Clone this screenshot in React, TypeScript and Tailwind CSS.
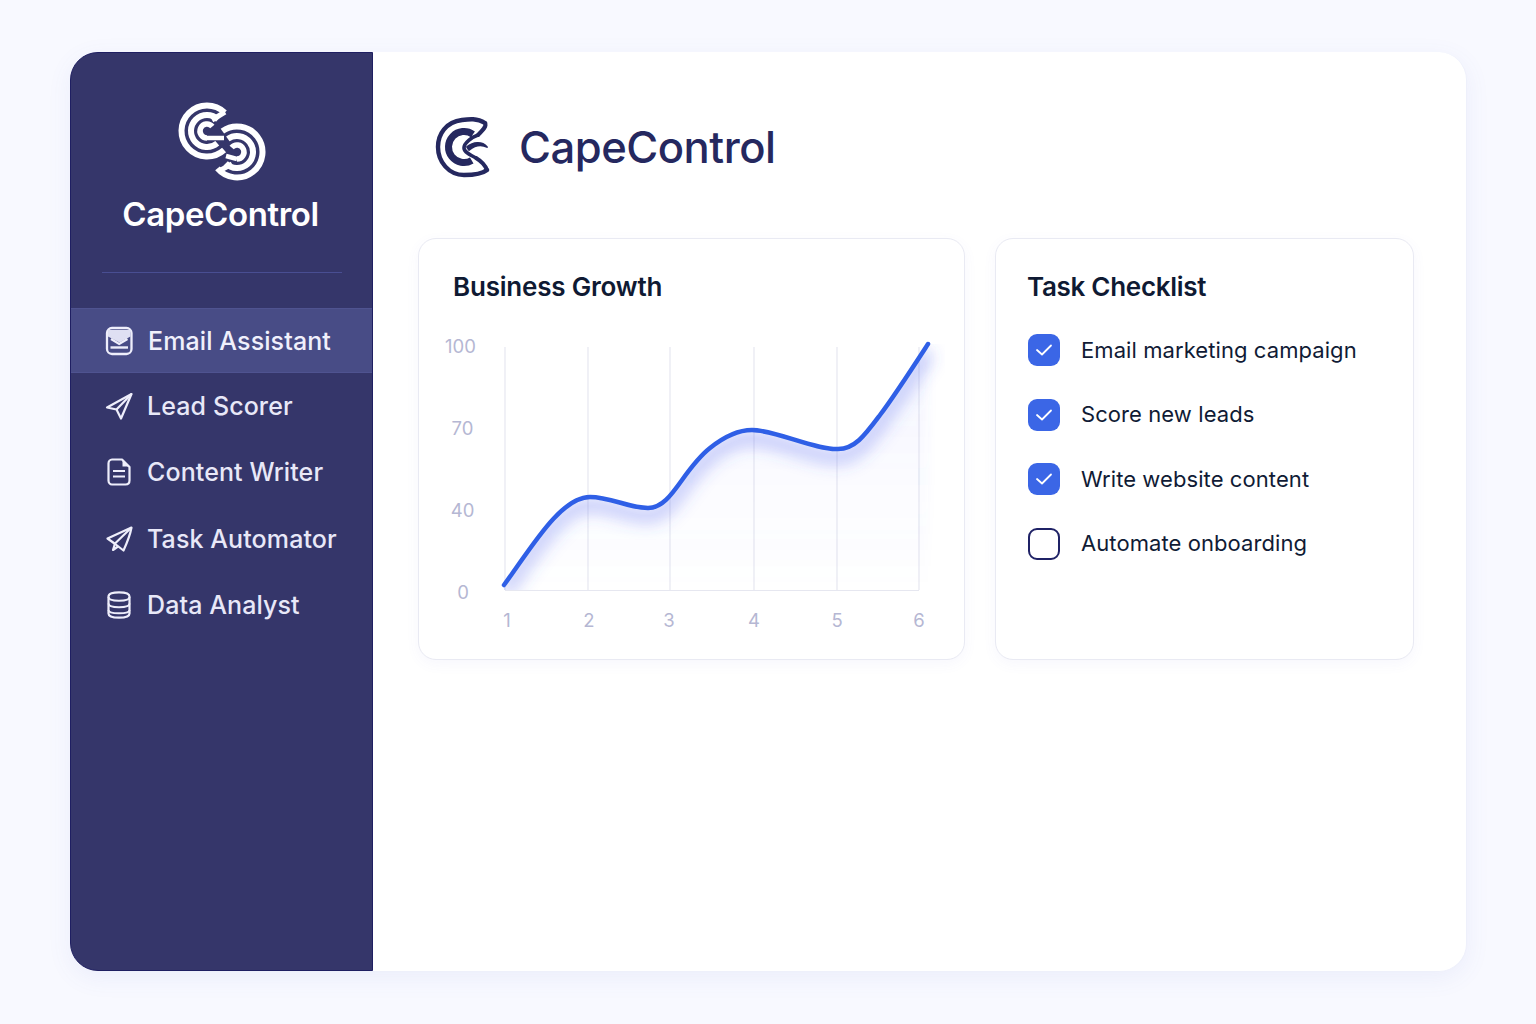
import React from "react";

const pt = (cx: number, cy: number, r: number, a: number) => {
  const t = (a * Math.PI) / 180;
  return [cx + r * Math.cos(t), cy + r * Math.sin(t)];
};
const arc = (cx: number, cy: number, r: number, a0: number, a1: number) => {
  const [x0, y0] = pt(cx, cy, r, a0);
  const [x1, y1] = pt(cx, cy, r, a1);
  const large = Math.abs(a1 - a0) > 180 ? 1 : 0;
  const sweep = a1 > a0 ? 1 : 0;
  return `M${x0.toFixed(2)} ${y0.toFixed(2)}A${r} ${r} 0 ${large} ${sweep} ${x1.toFixed(2)} ${y1.toFixed(2)}`;
};

function SideLogo() {
  const l = [207, 131];
  const r = [237, 152];
  return (
    <svg width="90" height="82" viewBox="177 101 90 82" className="block">
      <g fill="none" stroke="#ffffff" strokeWidth="6">
        <path d={arc(l[0], l[1], 25.500, -46, -312)} />
        <path d={arc(l[0], l[1], 16, -46, -310)} />
        <path d={arc(l[0], l[1], 7, -40, -270)} strokeWidth="5.500" />
        <path d="M225 112L212 120" strokeWidth="5" />
        <path d="M207 138L224 138" strokeWidth="4.500" />
        <path d={arc(r[0], r[1], 25.500, -125, 140)} />
        <path d={arc(r[0], r[1], 16, -125, 135)} />
        <path d={arc(r[0], r[1], 7, -140, 90)} strokeWidth="5.500" />
        <path d="M219 171L232 164" strokeWidth="5" />
        <path d="M237 159L226 156" strokeWidth="4.500" />
      </g>
    </svg>
  );
}

function MainLogo() {
  const c = [464, 147];
  return (
    <svg width="56" height="62" viewBox="434 116 56 62" className="block">
      <g fill="none" stroke="#25285f" strokeLinecap="round" strokeLinejoin="round">
        <path d="M485 123C477 118 469 119 462 120C446 122 438 134 438 147C438 162 449 175 464 175C474 175 482 174 487 170" strokeWidth="4.400" />
        <path d="M485 123C487 126 483 130 478 135" strokeWidth="4" />
        <path d="M487 170C485 165 481 161 476 158" strokeWidth="4" />
        <path d={arc(c[0], c[1], 15.500, -55, -300)} strokeWidth="7" strokeLinecap="butt" />
        <path d="M476 158C470 155 464 152 464 148C464 143 472 137 478 135" strokeWidth="3.600" />
        <path d="M467 147C473 142 482 141 487 147C481 144 474 146 469 150Z" fill="#25285f" strokeWidth="1.800" />
      </g>
    </svg>
  );
}

const iconStroke = "#eeeefb";

const EmailIcon = () => (
  <svg width="28" height="30" viewBox="0 0 28 30" className="block">
    <rect x="2" y="2" width="24.500" height="26" rx="5" fill="none" stroke={iconStroke} strokeWidth="2.300" />
    <path d="M3 4H25.500V10.500L14.500 16.500L3 10.500Z" fill="#dfe0f3" />
    <path d="M6 13L14.200 18L22.500 13" fill="none" stroke={iconStroke} strokeWidth="2.200" />
    <path d="M5.500 21.500H23" stroke={iconStroke} strokeWidth="2.400" />
  </svg>
);
const SendIcon = () => (
  <svg width="28" height="28" viewBox="0 0 28 28" className="block">
    <path d="M26.500 2L2 15.500L11.500 17.500L16 26.500Z" fill="none" stroke={iconStroke} strokeWidth="2.200" strokeLinejoin="round" />
    <path d="M26.500 2L11.500 17.500" stroke={iconStroke} strokeWidth="2.200" />
  </svg>
);
const FileIcon = () => (
  <svg width="28" height="30" viewBox="0 0 28 30" className="block">
    <path d="M7 2.500H17L24.500 10V23.500C24.500 25.700 23 27.500 20.500 27.500H7C5 27.500 3.500 25.700 3.500 23.500V6.500C3.500 4.300 5 2.500 7 2.500Z" fill="none" stroke={iconStroke} strokeWidth="2.200" strokeLinejoin="round" />
    <path d="M17.500 3V9.500H24Z" fill={iconStroke} />
    <path d="M8 14H20M8 19.500H20" stroke={iconStroke} strokeWidth="2.200" />
  </svg>
);
const PlaneIcon = () => (
  <svg width="28" height="28" viewBox="0 0 28 28" className="block">
    <path d="M26.500 2.500L2.500 13.500L9.500 18.500L18.500 25.500C21 20 25 11 26.500 2.500Z" fill="none" stroke={iconStroke} strokeWidth="2.200" strokeLinejoin="round" />
    <path d="M26.500 2.500L10 18.500L8 25L13 21.500" fill="none" stroke={iconStroke} strokeWidth="2.200" strokeLinejoin="round" />
  </svg>
);
const DbIcon = () => (
  <svg width="28" height="30" viewBox="0 0 28 30" className="block">
    <path d="M3.500 6.500C3.500 3.500 8 2.300 14 2.300C20 2.300 24.500 3.500 24.500 6.500V23.500C24.500 26.500 20 27.700 14 27.700C8 27.700 3.500 26.500 3.500 23.500Z" fill="none" stroke={iconStroke} strokeWidth="2.200" />
    <path d="M3.500 7C3.500 9.500 8 10.800 14 10.800C20 10.800 24.500 9.500 24.500 7M3.500 13.500C3.500 16 8 17.300 14 17.300C20 17.300 24.500 16 24.500 13.500M3.500 20C3.500 22.500 8 23.300 14 23.300C20 23.300 24.500 22.500 24.500 20" fill="none" stroke={iconStroke} strokeWidth="2" />
  </svg>
);

const nav = [
  { label: "Email Assistant", icon: <EmailIcon />, row: "h-[65px] bg-[#484c86] border-y border-[#4f5390] pl-[34px] gap-[15px]" },
  { label: "Lead Scorer", icon: <SendIcon />, row: "h-[65px] pl-[34px] gap-[14px]" },
  { label: "Content Writer", icon: <FileIcon />, row: "h-[67px] pl-[34px] gap-[14px]" },
  { label: "Task Automator", icon: <PlaneIcon />, row: "h-[67px] pl-[34px] gap-[14px]" },
  { label: "Data Analyst", icon: <DbIcon />, row: "h-[65px] pl-[34px] gap-[14px]" },
];

const tasks = [
  { label: "Email marketing campaign", done: true },
  { label: "Score new leads", done: true },
  { label: "Write website content", done: true },
  { label: "Automate onboarding", done: false },
];

const curve =
  "M504 585C530 550 560 497 590 497C610 497 630 508 648 508C672 508 682 470 710 448C725 436 740 430 752 430C775 430 815 450 838 449C855 449 865 435 880 415C895 395 915 364 928 344";

function Chart() {
  const xs = [505, 588, 670, 754, 837, 919];
  const xl = [507, 589, 669, 754, 837, 919];
  const yl: [string, number, number][] = [["100", 460.5, 347], ["70", 462.5, 429], ["40", 462.5, 511], ["0", 463, 593]];
  return (
    <svg width="545" height="330" viewBox="419 320 545 330" className="block mt-[15px]">
      <defs>
        <linearGradient id="area" x1="0" y1="0" x2="0" y2="1">
          <stop offset="0" stopColor="#5a6cf0" stopOpacity="0.06" />
          <stop offset="1" stopColor="#5a6cf0" stopOpacity="0" />
        </linearGradient>
        <clipPath id="under">
          <path d={`${curve}L945 344V590H504Z`} />
        </clipPath>
        <filter id="soft" x="-20%" y="-20%" width="140%" height="140%">
          <feGaussianBlur stdDeviation="8" />
        </filter>
        <filter id="soft2" x="-10%" y="-10%" width="120%" height="120%">
          <feGaussianBlur stdDeviation="5" />
        </filter>
      </defs>
      <g stroke="#e6e7f0" strokeWidth="1.200">
        {xs.map((x) => (
          <line key={x} x1={x} x2={x} y1="347" y2="590" />
        ))}
        <line x1="505" x2="919" y1="590.500" y2="590.500" />
      </g>
      <g clipPath="url(#under)">
        <path d={`${curve}V590H504Z`} fill="url(#area)" filter="url(#soft2)" />
        <path d={curve} transform="translate(0 8)" fill="none" stroke="#4a5cf0" strokeOpacity="0.3" strokeWidth="15" filter="url(#soft)" />
      </g>
      <path d={curve} fill="none" stroke="#2f5fe6" strokeWidth="4.500" strokeLinecap="round" />
      <g fill="#b5b7d3" fontSize="18.500" textAnchor="middle" fontFamily="Inter, sans-serif">
        {yl.map(([t, x, y]) => (
          <text key={t} x={x} y={y + 6}>{t}</text>
        ))}
        {xl.map((x, i) => (
          <text key={x} x={x} y="627">{i + 1}</text>
        ))}
      </g>
    </svg>
  );
}

export default function App() {
  return (
    <div className="w-[1536px] h-[1024px] bg-[#f8f9ff] pt-[52px] pl-[70px] font-['Inter',sans-serif] overflow-hidden">
      <div className="w-[1397px] h-[920px] flex rounded-[28px] bg-white shadow-[0_6px_24px_rgba(90,100,210,0.08)] border border-[#eef0fb] border-l-0 border-t-0">
        <aside className="w-[303px] shrink-0 bg-[#35366a] rounded-l-[28px] border border-[#1f1f62] flex flex-col">
          <div className="flex flex-col items-center pt-[48px]">
            <SideLogo />
            <div className="mt-[10px] -ml-[2px] text-[33px] leading-[42px] font-semibold tracking-[-0.4px] text-white">CapeControl</div>
            <div className="mt-[37px] w-[240px] h-px bg-[#494e92]" />
          </div>
          <nav className="mt-[35px] flex flex-col">
            {nav.map((n, i) => (
              <div key={n.label} className={`flex items-center ${n.row}`}>
                {n.icon}
                <span className={i === 0 ? "mt-[3px] font-medium text-[25px] tracking-[0.1px] text-[#f0f0fc]" : "mt-[3px] font-medium text-[25px] tracking-[0.1px] text-[#e8e8f8]"}>{n.label}</span>
              </div>
            ))}
          </nav>
        </aside>
        <main className="flex-1 pl-[45px] pr-[52px] pt-[64px]">
          <div className="flex items-center h-[62px] pl-[16px] gap-[29px]">
            <MainLogo />
            <span className="mt-[2px] text-[43.600px] leading-[62px] font-medium tracking-[-0.5px] text-[#25285f]">CapeControl</span>
          </div>
          <div className="mt-[60px] flex gap-[30px]">
            <section className="w-[547px] h-[422px] rounded-[18px] border border-[#e9eaf3] bg-white shadow-[0_4px_14px_rgba(90,100,210,0.05)] pt-[30px]">
              <h2 className="pl-[34px] text-[26px] leading-[36px] font-semibold tracking-[-0.2px] text-[#0f1a33]">Business Growth</h2>
              <Chart />
            </section>
            <section className="w-[419px] h-[422px] rounded-[18px] border border-[#e9eaf3] bg-white shadow-[0_4px_14px_rgba(90,100,210,0.05)] pt-[30px] pl-[31px]">
              <h2 className="text-[26px] leading-[36px] font-semibold tracking-[-0.3px] text-[#0f1a33]">Task Checklist</h2>
              <ul className="mt-[29px] pl-px flex flex-col gap-[32.600px]">
                {tasks.map((t) => (
                  <li key={t.label} className="flex items-center h-[32px] gap-[21px]">
                    {t.done ? (
                      <span className="w-[32px] h-[32px] rounded-[9px] bg-[#3b66e6] flex items-center justify-center">
                        <svg width="18" height="14" viewBox="0 0 18 14" className="block">
                          <path d="M2 7L7 11.500L16 2.500" fill="none" stroke="#ffffff" strokeWidth="1.800" strokeLinecap="round" strokeLinejoin="round" />
                        </svg>
                      </span>
                    ) : (
                      <span className="w-[32px] h-[32px] rounded-[9px] border-2 border-[#1f2266] bg-white" />
                    )}
                    <span className="text-[22px] tracking-[0.08px] text-[#101b35]">{t.label}</span>
                  </li>
                ))}
              </ul>
            </section>
          </div>
        </main>
      </div>
    </div>
  );
}
